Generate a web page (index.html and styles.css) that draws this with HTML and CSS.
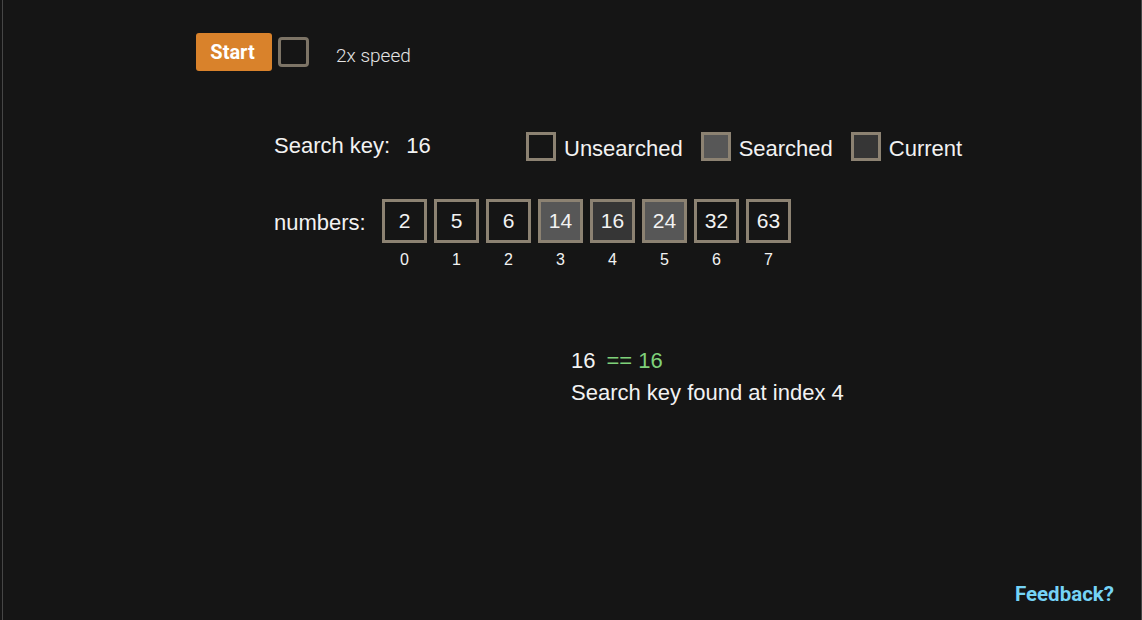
FILE: index.html
```html
<!DOCTYPE html>
<html>
<head>
<meta charset="utf-8">
<link rel="stylesheet" href="styles.css">
</head>
<body>
<div class="frame">
  <div class="controls">
    <button class="start">Start</button>
    <span class="check"></span>
    <span class="speed">2x speed</span>
  </div>
  <div class="viz">
    <div class="row-key">
      <div class="key">Search key:<span class="key-val">16</span></div>
      <div class="legend">
        <span class="sw"></span><span class="lg-label">Unsearched</span>
        <span class="sw searched"></span><span class="lg-label">Searched</span>
        <span class="sw current"></span><span class="lg-label">Current</span>
      </div>
    </div>
    <div class="row-nums">
      <div class="nums-label">numbers:</div>
      <div class="cells">
        <div class="cell"><div class="box">2</div><div class="idx">0</div></div>
        <div class="cell"><div class="box">5</div><div class="idx">1</div></div>
        <div class="cell"><div class="box">6</div><div class="idx">2</div></div>
        <div class="cell"><div class="box searched">14</div><div class="idx">3</div></div>
        <div class="cell"><div class="box current">16</div><div class="idx">4</div></div>
        <div class="cell"><div class="box searched">24</div><div class="idx">5</div></div>
        <div class="cell"><div class="box">32</div><div class="idx">6</div></div>
        <div class="cell"><div class="box">63</div><div class="idx">7</div></div>
      </div>
    </div>
    <div class="result">
      <div class="cmp">16<span class="eq">== 16</span></div>
      <div class="msg">Search key found at index 4</div>
    </div>
  </div>
  <div class="footer"><span class="feedback">Feedback?</span></div>
</div>
</body>
</html>
```
FILE: styles.css
```css
html, body {
  margin: 0;
  padding: 0;
  background: #151515;
}
body {
  width: 1142px;
  height: 620px;
  overflow: hidden;
  font-family: "Liberation Sans", Arial, sans-serif;
  color: #f2f2f2;
}
.frame {
  margin-left: 2px;
  width: 1140px;
  height: 620px;
  box-sizing: border-box;
  border-left: 1px solid #464646;
  border-right: 1px solid #464646;
  display: flex;
  flex-direction: column;
}
.controls {
  display: flex;
  align-items: center;
  padding: 33px 0 0 193px;
  height: 38px;
}
.start {
  width: 76px;
  height: 38px;
  background: #d9822b;
  border: none;
  border-radius: 3px;
  color: #fff;
  font-family: Roboto, sans-serif;
  font-weight: 700;
  font-size: 20px;
  padding: 0 3px 0 0;
  margin: 0;
}
.check {
  width: 31px;
  height: 30px;
  box-sizing: border-box;
  border: 3px solid #7d7466;
  border-radius: 4px;
  margin-left: 6px;
}
.speed {
  font-family: Roboto, sans-serif;
  font-weight: 300;
  font-size: 19px;
  color: #e4e4e4;
  margin-left: 27px;
  margin-top: 6px;
}
.viz {
  padding-left: 271px;
}
.row-key {
  display: flex;
  align-items: flex-start;
  margin-top: 62px;
}
.key {
  font-size: 22px;
  line-height: 26px;
  width: 252px;
}
.key-val {
  margin-left: 16px;
}
.legend {
  display: flex;
  align-items: flex-start;
  font-size: 22px;
  margin-top: -1px;
}
.sw {
  width: 30px;
  height: 29px;
  box-sizing: border-box;
  border: 3px solid #8c8272;
  background: #151515;
}
.sw.searched { background: #575757; }
.sw.current { background: #363636; }
.lg-label {
  margin-left: 8px;
  margin-right: 18px;
  line-height: 26px;
  margin-top: 4px;
}
.row-nums {
  display: flex;
  align-items: flex-start;
  margin-top: 37px;
}
.nums-label {
  font-size: 22px;
  line-height: 26px;
  width: 108px;
  margin-top: 11px;
}
.cells {
  display: flex;
  gap: 7px;
}
.cell {
  display: flex;
  flex-direction: column;
  align-items: center;
  width: 45px;
}
.box {
  width: 45px;
  height: 44px;
  box-sizing: border-box;
  border: 3px solid #8c8272;
  display: flex;
  align-items: center;
  justify-content: center;
  font-size: 21px;
  background: #151515;
}
.box.searched { background: #575757; }
.box.current { background: #363636; }
.idx {
  font-size: 16px;
  margin-top: 8px;
  line-height: 18px;
}
.result {
  margin-left: 297px;
  margin-top: 76px;
  font-size: 22px;
  line-height: 32px;
}
.eq {
  color: #7fd17a;
  margin-left: 11px;
}
.footer {
  margin-top: auto;
  display: flex;
  justify-content: flex-end;
  padding: 0 27px 14px 0;
}
.feedback {
  font-family: Roboto, sans-serif;
  font-weight: 700;
  font-size: 20.5px;
  color: #75d3f6;
}
```
